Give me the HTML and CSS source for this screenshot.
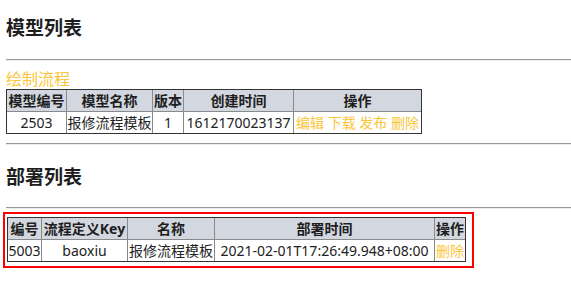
FILE: index.html
```html
<!DOCTYPE html>
<html lang="zh-CN">

<head>
    <meta charset="UTF-8">
    <meta name="viewport" content="width=device-width, initial-scale=1.0">
    <title>模型列表</title>
    <link rel="stylesheet" href="styles.css">
</head>

<body>

    <h3 class="title title-model">模型列表</h3>
    <hr class="line line-top">

    <a class="link draw" href="#">绘制流程</a>
    <table class="list model-list">
        <tr>
            <th class="c-id">模型编号</th>
            <th class="c-name">模型名称</th>
            <th class="c-ver">版本</th>
            <th class="c-time">创建时间</th>
            <th class="c-op">操作</th>
        </tr>
        <tr>
            <td>2503</td>
            <td>报修流程模板</td>
            <td>1</td>
            <td>1612170023137</td>
            <td><a class="link" href="#">编辑</a> <a class="link" href="#">下载</a> <a class="link" href="#">发布</a> <a class="link" href="#">删除</a></td>
        </tr>
    </table>

    <hr class="line line-mid">

    <h3 class="title title-deploy">部署列表</h3>
    <hr class="line line-bottom">

    <div class="mark">
        <table class="list deploy-list">
            <tr>
                <th class="d-id">编号</th>
                <th class="d-key">流程定义Key</th>
                <th class="d-name">名称</th>
                <th class="d-time">部署时间</th>
                <th class="d-op">操作</th>
            </tr>
            <tr>
                <td>5003</td>
                <td>baoxiu</td>
                <td>报修流程模板</td>
                <td>2021-02-01T17:26:49.948+08:00</td>
                <td><a class="link" href="#">删除</a></td>
            </tr>
        </table>
    </div>

</body>

</html>
```

FILE: styles.css
```css
* {
    box-sizing: content-box;
}

body {
    margin: 0;
    padding: 0 0 0 6px;
    font-family: "Noto Sans", "Noto Sans CJK SC", sans-serif;
    color: #222;
    background-color: #fff;
}

.title {
    font-size: 19px;
    line-height: 26px;
    font-weight: bold;
    color: #1e1e1e;
}

.title-model {
    margin: 15px 0 18px;
}

.title-deploy {
    margin: 19px 0 17px;
}

.line {
    height: 0;
    margin: 0;
    border: 0;
    border-top: 1px solid #9a9a9a;
    border-bottom: 1px solid #ececec;
}

.line-mid {
    margin-top: 9px;
}

.link {
    color: #fbc53a;
    text-decoration: none;
}

.draw {
    display: block;
    margin-top: 9px;
    font-size: 16px;
    line-height: 19px;
}

.list {
    border-collapse: separate;
    border-spacing: 0;
    border: 1px solid #333;
    font-size: 14px;
    line-height: 21px;
}

.list th,
.list td {
    padding: 0;
    text-align: center;
    white-space: nowrap;
    border-right: 1px solid #8a8a8a;
    border-bottom: 1px solid #8a8a8a;
}

.list th:last-child,
.list td:last-child {
    border-right: 0;
}

.list tr:last-child td {
    border-bottom: 0;
}

.list th {
    font-weight: bold;
    background-color: #d3d7df;
    color: #1e1e1e;
}

.list td {
    color: #222;
}

/* 模型列表列宽 */
.c-id { width: 59px; }
.c-name { width: 85px; }
.c-ver { width: 30px; }
.c-time { width: 109px; }
.c-op { width: 127px; }

/* 部署列表列宽 */
.d-id { width: 33px; }
.d-key { width: 85px; }
.d-name { width: 86px; }
.d-time { width: 219px; }
.d-op { width: 30px; }

.mark {
    display: inline-block;
    margin: 3px 0 0 -3px;
    padding: 3px 6px 4px 2px;
    border: 2px solid #f00;
}
```
